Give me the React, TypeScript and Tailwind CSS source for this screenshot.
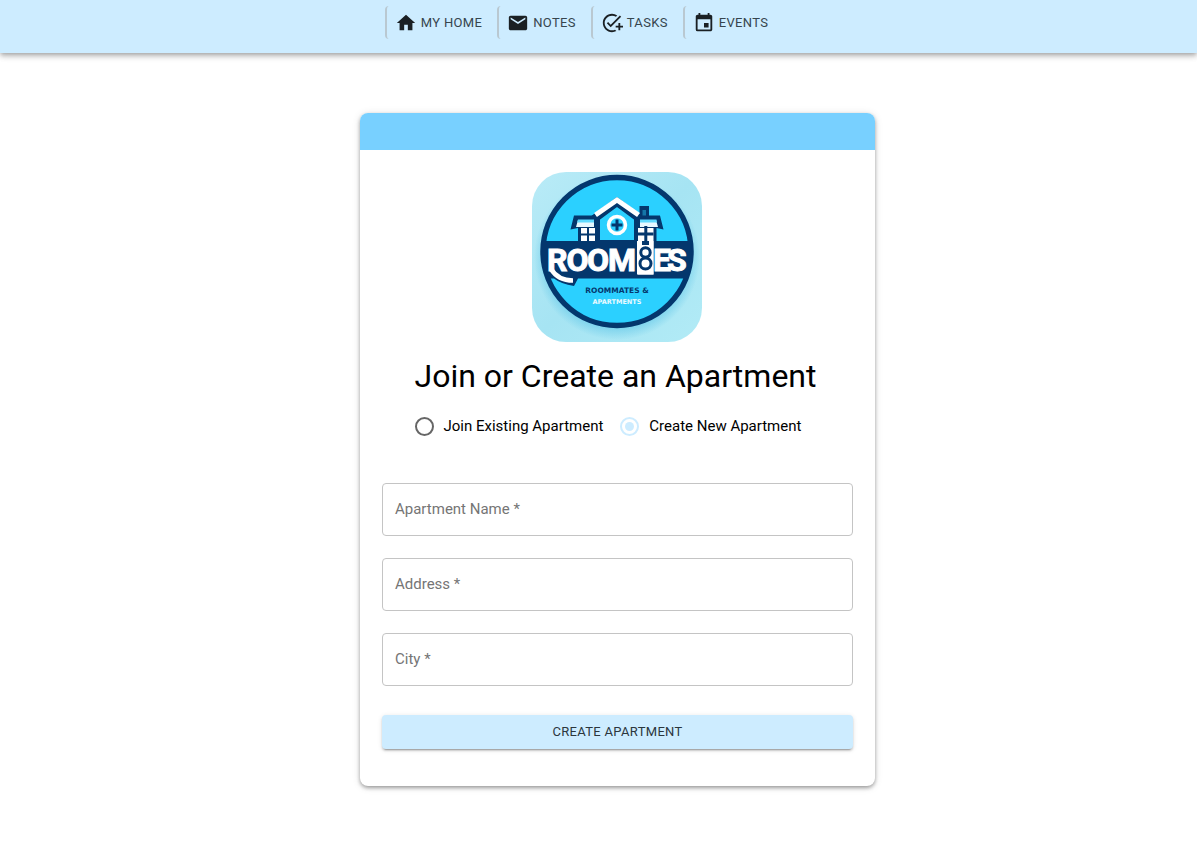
import { useState } from "react";
import type { IconType } from "react-icons";
import { MdAddTask, MdEmail, MdEvent, MdHome } from "react-icons/md";

const links: { label: string; href: string; Icon: IconType }[] = [
  { label: "My Home", href: "#home", Icon: MdHome },
  { label: "Notes", href: "#notes", Icon: MdEmail },
  { label: "Tasks", href: "#tasks", Icon: MdAddTask },
  { label: "Events", href: "#events", Icon: MdEvent },
];

const modes = [
  { value: "join", label: "Join Existing Apartment" },
  { value: "create", label: "Create New Apartment" },
];

const fields = [
  { id: "name", label: "Apartment Name *" },
  { id: "address", label: "Address *" },
  { id: "city", label: "City *" },
];

function Logo() {
  return (
    <svg viewBox="0 0 171 171" className="size-[171px]" role="img" aria-label="Roomies">
      <defs>
        <linearGradient id="tile" x1="0" y1="0" x2="1" y2="1">
          <stop offset="0" stopColor="#b9ebf7" />
          <stop offset="0.5" stopColor="#a6e4f3" />
          <stop offset="1" stopColor="#b2ebf6" />
        </linearGradient>
        <radialGradient id="halo">
          <stop offset="0.8" stopColor="#6fcdea" />
          <stop offset="1" stopColor="#6fcdea" stopOpacity="0" />
        </radialGradient>
        <clipPath id="disc">
          <circle cx="85" cy="80" r="75" />
        </clipPath>
      </defs>
      <rect width="170" height="170" rx="34" fill="url(#tile)" />
      <circle cx="85" cy="85" r="83" fill="url(#halo)" />
      <circle cx="85" cy="79.500" r="74" fill="#2bd0ff" stroke="#04376d" strokeWidth="5.5" />
      <g clipPath="url(#disc)">
        <path d="M0 69H170V106.500H46L42 114Q29 112 22 106.500H0Z" fill="#04376d" />
      </g>
      {/* main gable */}
      <path d="M66 70V46L85 31L104 46V70Z" fill="#2bd0ff" stroke="#04376d" strokeWidth="4" />
      <path d="M62 47L85 30L108 47" fill="none" stroke="#04376d" strokeWidth="8" />
      {/* chimney */}
      <path d="M107.500 34H117V46H107.500Z" fill="#04376d" />
      <path d="M110.500 38H114V44H110.500Z" fill="#1477a8" />
      {/* left wing */}
      <path d="M42 43.500H65V70H46V56L38.500 57.500Z" fill="#04376d" />
      <path d="M46 48H62V55H44Z" fill="#e6f8ff" />
      <path d="M46 47.500H62V50.500H45Z" fill="#5edaff" />
      <path d="M49 56H55V61.500H49ZM57 56H63V61.500H57ZM49 63.500H55V69H49ZM57 63.500H63V69H57Z" fill="#fff" />
      {/* right wing */}
      <path d="M105 43.500H128L131.500 57.500L124.500 56V70H105Z" fill="#04376d" />
      <path d="M108 48H124L126 55H108Z" fill="#e6f8ff" />
      <path d="M108 47.500H124.500L125 50.500H108Z" fill="#5edaff" />
      <path d="M106 56H121.500V102.500H106Z" fill="#fff" />
      <path d="M112.300 54H115.300V69H112.300ZM106 60.500H121.500V63.500H106Z" fill="#04376d" />
      {/* white roof edge */}
      <path d="M63.500 43L85 28L106.500 43" fill="none" stroke="#fff" strokeWidth="5" />
      {/* round window */}
      <circle cx="85" cy="53" r="8.500" fill="#2bd0ff" stroke="#fff" strokeWidth="3.500" />
      <path d="M85 47.500V58.500M79.500 53H90.500" stroke="#04376d" strokeWidth="3" />
      <path d="M19 97Q26 108.500 41 108.500" fill="none" stroke="#fff" strokeWidth="4.500" />
      <g
        fill="#fff"
        stroke="#fff"
        strokeWidth="1"
        fontFamily="Roboto, sans-serif"
        fontWeight="700"
        fontSize="32"
      >
        <text y="99" x="15 34.500 55 76">ROOM</text>
        <text y="99" x="121 135">ES</text>
      </g>
      <path d="M105 69H121.500V102.500H105Z" fill="#fff" />
      <path d="M110 69H117V73H110Z" fill="#04376d" />
      <circle cx="113.500" cy="80.500" r="4.700" fill="#fff" stroke="#04376d" strokeWidth="3" />
      <circle cx="113.500" cy="91.500" r="5.500" fill="#fff" stroke="#04376d" strokeWidth="3" />
      <g textAnchor="middle" fontFamily="'DejaVu Sans', sans-serif" fontWeight="700">
        <text x="85" y="121" fontSize="7.5" fill="#04376d">
          ROOMMATES &amp;
        </text>
        <text x="85" y="131.500" fontSize="6.5" fill="#e9faff">
          APARTMENTS
        </text>
      </g>
    </svg>
  );
}

export default function App() {
  const [mode, setMode] = useState("create");

  return (
    <div className="min-h-screen bg-white font-[Roboto,sans-serif] text-black">
      <header className="bg-[#cdecff] pt-1.5 pb-3.5 shadow-[0_2px_4px_-1px_rgba(0,0,0,0.2),0_4px_5px_rgba(0,0,0,0.14),0_1px_9px_rgba(0,0,0,0.12)]">
        <nav className="flex justify-center gap-[7px] pr-9">
          {links.map(({ label, href, Icon }) => (
            <a
              key={label}
              href={href}
              className="flex h-[33px] items-center gap-1 rounded-sm border-l-2 border-[#b9c8d1] px-2 text-[13px] tracking-wide text-[#36454e] uppercase"
            >
              <Icon className="size-[22px] text-[#1a2024]" aria-hidden="true" />
              {label}
            </a>
          ))}
        </nav>
      </header>

      <main className="flex justify-center pt-[60px] pb-10 pl-[38px]">
        <section className="w-full max-w-[515px] overflow-hidden rounded-lg shadow-[0_2px_4px_-1px_rgba(0,0,0,0.3),0_2px_4px_rgba(0,0,0,0.14),0_1px_8px_rgba(0,0,0,0.12)]">
          <div className="h-[37px] bg-[#78d0ff]" />
          <div className="px-[22px] pt-[22px] pb-[37px]">
            <div className="flex justify-center">
              <Logo />
            </div>
            <form onSubmit={(event) => event.preventDefault()}>
              <div className="mx-auto max-w-[406px]">
                <h1 className="pt-[13px] text-[32px] leading-10">Join or Create an Apartment</h1>
                <div role="radiogroup" aria-label="Apartment" className="mt-5 flex gap-[17px]">
                  {modes.map(({ value, label }) => (
                    <label key={value} className="flex h-5 items-center gap-2.5 text-[15px]">
                      <input
                        type="radio"
                        name="mode"
                        value={value}
                        checked={mode === value}
                        onChange={() => setMode(value)}
                        className="grid size-[19px] appearance-none place-items-center rounded-full border-2 border-[#666] before:size-[9px] before:rounded-full checked:border-[#cdecff] checked:before:bg-[#cdecff]"
                      />
                      {label}
                    </label>
                  ))}
                </div>
              </div>
              <div className="mt-[47px] flex flex-col gap-[22px]">
                {fields.map(({ id, label }) => (
                  <div key={id} className="relative">
                    <input
                      id={id}
                      type="text"
                      required
                      placeholder=" "
                      className="peer block h-[53px] w-full rounded-sm border border-[#c4c4c4] px-3 text-[15px] shadow-none outline-none focus:border-[#78d0ff]"
                    />
                    <label
                      htmlFor={id}
                      className="pointer-events-none absolute inset-y-0 left-[13px] hidden items-center text-[15px] text-[#757575] peer-placeholder-shown:flex"
                    >
                      {label}
                    </label>
                  </div>
                ))}
              </div>
              <button
                type="submit"
                className="mt-[29px] h-[34px] w-full rounded-sm bg-[#cdecff] text-[13px] tracking-wide text-[#2b363d] uppercase shadow-[0_3px_1px_-2px_rgba(0,0,0,0.2),0_2px_2px_rgba(0,0,0,0.14),0_1px_5px_rgba(0,0,0,0.12)]"
              >
                Create Apartment
              </button>
            </form>
          </div>
        </section>
      </main>
    </div>
  );
}
